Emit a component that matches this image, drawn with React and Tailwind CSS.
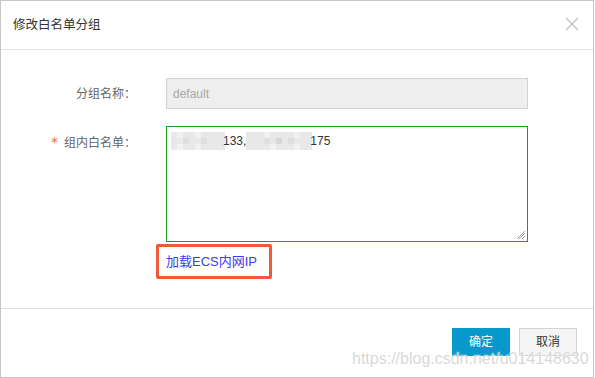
import React from "react";

const shades = ["bg-[#f1f1f1]", "bg-[#e8e8e8]", "bg-[#dfdfdf]", "bg-[#d6d6d6]"];

// blurred ip fragment, cells of 6px
function Mosaic({ pattern }) {
  return (
    <span className="inline-flex flex-col align-middle">
      {pattern.map((row, i) => (
        <span key={i} className="flex">
          {row.map((c, j) => (
            <span key={j} className={`w-[6px] h-[6px] ${shades[c]}`} />
          ))}
        </span>
      ))}
    </span>
  );
}

const blockA = [
  [1, 0, 1, 1, 0, 1, 1, 1, 1],
  [1, 1, 2, 1, 1, 2, 1, 1, 1],
  [1, 0, 1, 1, 0, 1, 1, 1, 1],
];

const blockB = [
  [1, 1, 1, 0, 1, 1, 1, 1, 0, 1, 1],
  [1, 1, 1, 2, 1, 3, 1, 2, 1, 1, 1],
  [1, 1, 1, 1, 0, 1, 1, 1, 0, 1, 1],
];

export default function App() {
  return (
    <div className="relative w-[595px] h-[378px] bg-white font-['Liberation_Sans','Noto_Sans_CJK_SC',sans-serif] text-[12px]">
      <div className="w-[594px] h-[378px] border border-[#c6c6c6] flex flex-col">
        {/* header */}
        <div className="h-[49px] border-b border-[#e2e2e2] flex items-center justify-between pl-[12px] pr-[14px] shrink-0">
          <span className="text-[12.5px] text-[#333]">修改白名单分组</span>
          <svg width="14" height="14" viewBox="0 0 14 14" className="mb-[3px]">
            <path d="M1 1 L13 13 M13 1 L1 13" stroke="#c4c4c4" strokeWidth="1.4" fill="none" />
          </svg>
        </div>

        {/* body */}
        <div className="h-[258px] shrink-0 pt-[28px] flex flex-col">
          <div className="flex items-center h-[31px]">
            <span className="w-[135px] text-right text-[#666]">分组名称：</span>
            <div className="ml-[30px] w-[362px] h-[31px] bg-[#eeeeee] border border-[#d2d2d2] flex items-center pl-[6px] text-[#a8a8a8]">
              default
            </div>
          </div>

          <div className="flex mt-[17px]">
            <span className="w-[135px] text-right text-[#666] pt-[8px] leading-[16px]">
              <span className="text-[#f26b3a] text-[14px] font-['DejaVu_Sans',sans-serif] mr-[6px]">*</span>组内白名单：
            </span>
            <div className="relative ml-[30px] w-[362px] h-[116px] border border-[#18a018] pl-[4px] pt-[5px]">
              <div className="flex items-center text-[#333] leading-[18px]">
                <Mosaic pattern={blockA} />
                <span className="ml-[-2px]">133,</span>
                <Mosaic pattern={blockB} />
                <span className="ml-[-2px]">175</span>
              </div>
              <svg width="9" height="9" viewBox="0 0 9 9" className="absolute right-[1px] bottom-[1px]">
                <path d="M8 2 L2 8 M8 5 L5 8 M8 0 L0 8" stroke="#8a8a8a" strokeWidth="0.8" />
              </svg>
            </div>
          </div>

          <div className="ml-[155px] mt-[2px] w-[116px] h-[35px] border-[3px] border-[#f05a3c] rounded-[2px] flex items-center pl-[7px]">
            <span className="text-[13px] text-[#3b3bf0] whitespace-nowrap">加载ECS内网IP</span>
          </div>
        </div>

        {/* footer */}
        <div className="flex-1 border-t border-[#dedede] flex justify-end items-start pt-[19px] pr-[16px] gap-[9px]">
          <button className="w-[58px] h-[28px] bg-[#0799cc] text-white">确定</button>
          <button className="w-[58px] h-[28px] bg-[#f5f5f5] border border-[#d4d4d4] text-[#333]">取消</button>
        </div>
      </div>

      {/* watermark */}
      <div className="absolute left-[352px] top-[350px] text-[16px] leading-[18px] text-[#d4d4d4]/90 [text-shadow:0_0_2px_#fff] font-['Liberation_Sans',sans-serif] whitespace-nowrap pointer-events-none">
        https://blog.csdn.net/u014148630
      </div>
    </div>
  );
}
